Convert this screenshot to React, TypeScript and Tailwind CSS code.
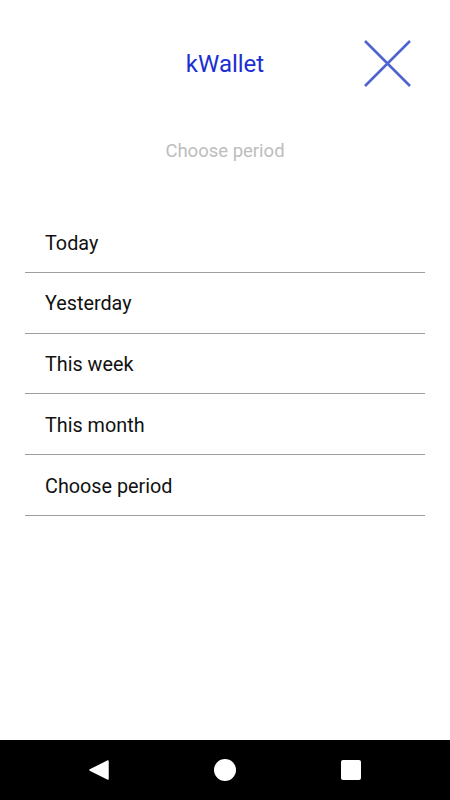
import React from 'react';

const periods = ['Today', 'Yesterday', 'This week', 'This month', 'Choose period'];

const App: React.FC = () => {
  return (
    <div className="flex h-[800px] w-[450px] flex-col bg-white font-['Roboto',sans-serif]">
      {/* Header */}
      <div className="relative flex h-[139px] items-start justify-center pt-[48px]">
        <h1 className="text-[24px] leading-[32px] text-[#1c2fd1]">kWallet</h1>
        <button className="absolute right-[38px] top-[39px] h-[49px] w-[49px]">
          <svg viewBox="0 0 49 49" className="h-full w-full">
            <path d="M2 2 L47 47 M47 2 L2 47" stroke="#5064cf" strokeWidth="2.6" />
          </svg>
        </button>
      </div>

      <p className="text-center text-[18.5px] leading-[24px] text-[#bdbdbd]">Choose period</p>

      {/* Period list */}
      <ul className="mx-[25px] mt-[49px]">
        {periods.map((p) => (
          <li
            key={p}
            className="flex h-[60.75px] items-center border-b border-[#9e9e9e] pl-[20px] pt-[3px] text-[19.8px] text-[#111]"
          >
            {p}
          </li>
        ))}
      </ul>

      <div className="flex-1" />

      {/* Android nav bar */}
      <div className="flex h-[60px] items-center justify-center gap-[105px] bg-black">
        <svg width="20" height="20" viewBox="0 0 20 20">
          <path d="M19 1 L19 19 L1 10 Z" fill="white" stroke="white" strokeWidth="1.5" strokeLinejoin="round" />
        </svg>
        <div className="h-[22px] w-[22px] rounded-full bg-white" />
        <div className="h-[20px] w-[20px] rounded-[2px] bg-white" />
      </div>
    </div>
  );
};

export default App;
